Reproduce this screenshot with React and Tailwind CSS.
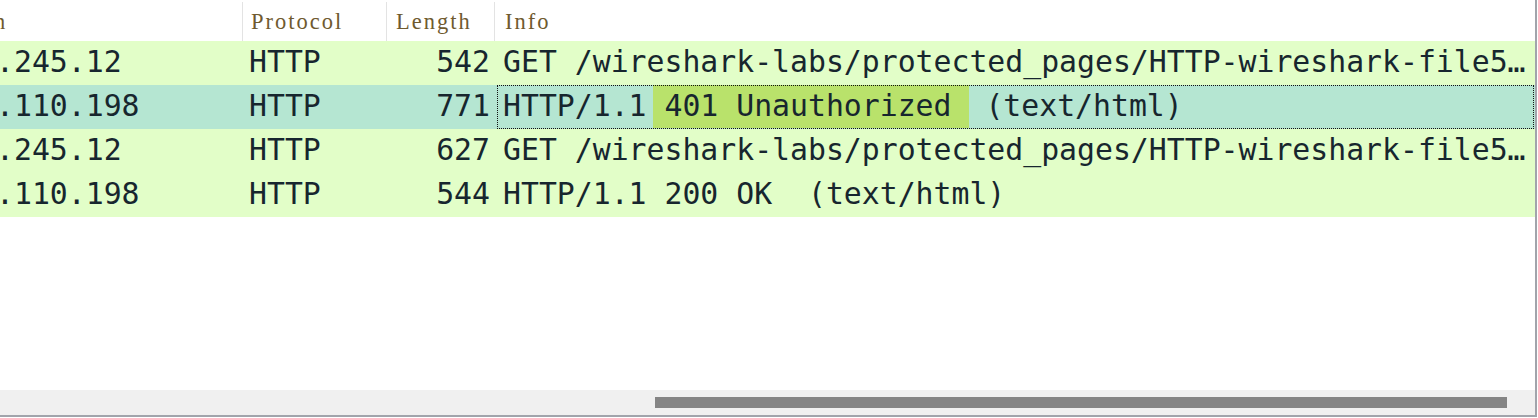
const mono = { fontFamily: '"DejaVu Sans Mono", "Liberation Mono", monospace' };

const rows = [
  { dst: '.245.12', proto: 'HTTP', len: '542', info: 'GET /wireshark-labs/protected_pages/HTTP-wireshark-file5.html HTTP/1.1' },
  { dst: '.110.198', proto: 'HTTP', len: '771', selected: true },
  { dst: '.245.12', proto: 'HTTP', len: '627', info: 'GET /wireshark-labs/protected_pages/HTTP-wireshark-file5.html HTTP/1.1' },
  { dst: '.110.198', proto: 'HTTP', len: '544', info: 'HTTP/1.1 200 OK  (text/html)' },
];

const HeaderCell = ({ className = '', children }) => (
  <div className={`h-full flex items-center border-l border-[#e3e3e3] ${className}`}>{children}</div>
);

const PacketRow = ({ row }) => (
  <div
    className={`h-[44px] flex items-start text-[29.8px] leading-[42px] text-[#17262e] whitespace-pre ${
      row.selected ? 'bg-[#b5e6d2]' : 'bg-[#e2fec8]'
    }`}
    style={mono}
  >
    <div className="w-[242px] shrink-0 overflow-hidden">
      <span className="-ml-[4px] block">{row.dst}</span>
    </div>
    <div className="w-[144px] shrink-0 pl-[7px]">{row.proto}</div>
    <div className="w-[108px] shrink-0 text-right pr-[4px]">{row.len}</div>
    <div className="flex-1 min-w-0 h-full pl-[3px] pr-[1px]">
      <div className="relative h-full pl-[6px] overflow-hidden text-ellipsis">
        {row.selected ? (
          <>
            HTTP/1.1{' '}
            <span className="bg-[#b9e26b] border-t-2 border-[#e6f55b] pt-[5px] pb-[5px] -ml-[11px] pl-[11px] -mr-[2px] pr-0">
              401 Unauthorized{' '}
            </span>{' '}
            (text/html)
            <div className="absolute inset-0 border border-dotted border-[#111] pointer-events-none" />
          </>
        ) : (
          row.info
        )}
      </div>
    </div>
  </div>
);

export default function App() {
  return (
    <div className="w-[1538px] h-[418px] bg-white overflow-hidden">
      <div className="w-[1537px] h-[417px] border-r-2 border-b-2 border-[#a1a4ab] flex flex-col">
        <div
          className="h-[41px] flex text-[22.5px] tracking-[2px] text-[#6f5a2f] pt-[2px]"
          style={{ fontFamily: '"Liberation Serif", "DejaVu Serif", serif' }}
        >
          <div className="w-[242px] shrink-0 flex items-center overflow-hidden">
            <span className="-ml-[6px]">n</span>
          </div>
          <HeaderCell className="w-[144px] shrink-0 pl-[8px]">Protocol</HeaderCell>
          <HeaderCell className="w-[108px] shrink-0 pl-[9px]">Length</HeaderCell>
          <HeaderCell className="flex-1 pl-[10px]">Info</HeaderCell>
        </div>
        {rows.map((r, i) => (
          <PacketRow key={i} row={r} />
        ))}
        <div className="flex-1" />
        <div className="h-[25px] bg-[#f0f0f0] flex items-center">
          <div className="ml-[655px] w-[852px] h-[11px] bg-[#858585]" />
        </div>
      </div>
    </div>
  );
}
